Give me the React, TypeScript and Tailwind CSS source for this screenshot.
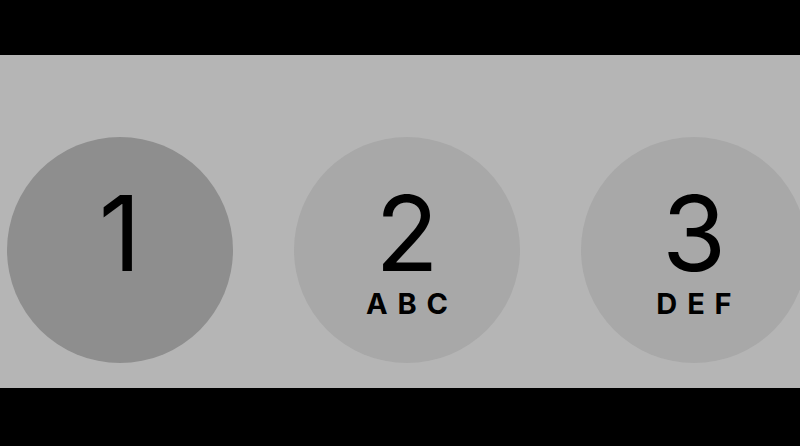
const KEYS = [
  { digit: "1", letters: "", pressed: true },
  { digit: "2", letters: "ABC", pressed: false },
  { digit: "3", letters: "DEF", pressed: false },
];

function Key({ digit, letters, pressed }: { digit: string; letters: string; pressed: boolean }) {
  return (
    <div
      className={`flex h-[226px] w-[226px] shrink-0 flex-col items-center rounded-full pt-[44px] ${
        pressed ? "bg-[#8e8e8e]" : "bg-[#a8a8a8]"
      }`}
    >
      <span className="text-[104px] font-normal leading-[104px] text-black">{digit}</span>
      {letters && (
        <span className="mt-[4px] pl-[0.34em] text-[29px] font-bold leading-[29px] tracking-[0.34em] text-black">
          {letters}
        </span>
      )}
    </div>
  );
}

export default function App() {
  return (
    <div
      className="flex h-[446px] w-[800px] flex-col overflow-hidden bg-black"
      style={{ fontFamily: "Inter, 'Noto Sans', sans-serif" }}
    >
      <div className="h-[55px] shrink-0" />
      <div className="flex h-[333px] shrink-0 gap-[61px] bg-[#b5b5b5] pl-[7px] pt-[82px]">
        {KEYS.map((k) => (
          <Key key={k.digit} {...k} />
        ))}
      </div>
    </div>
  );
}
